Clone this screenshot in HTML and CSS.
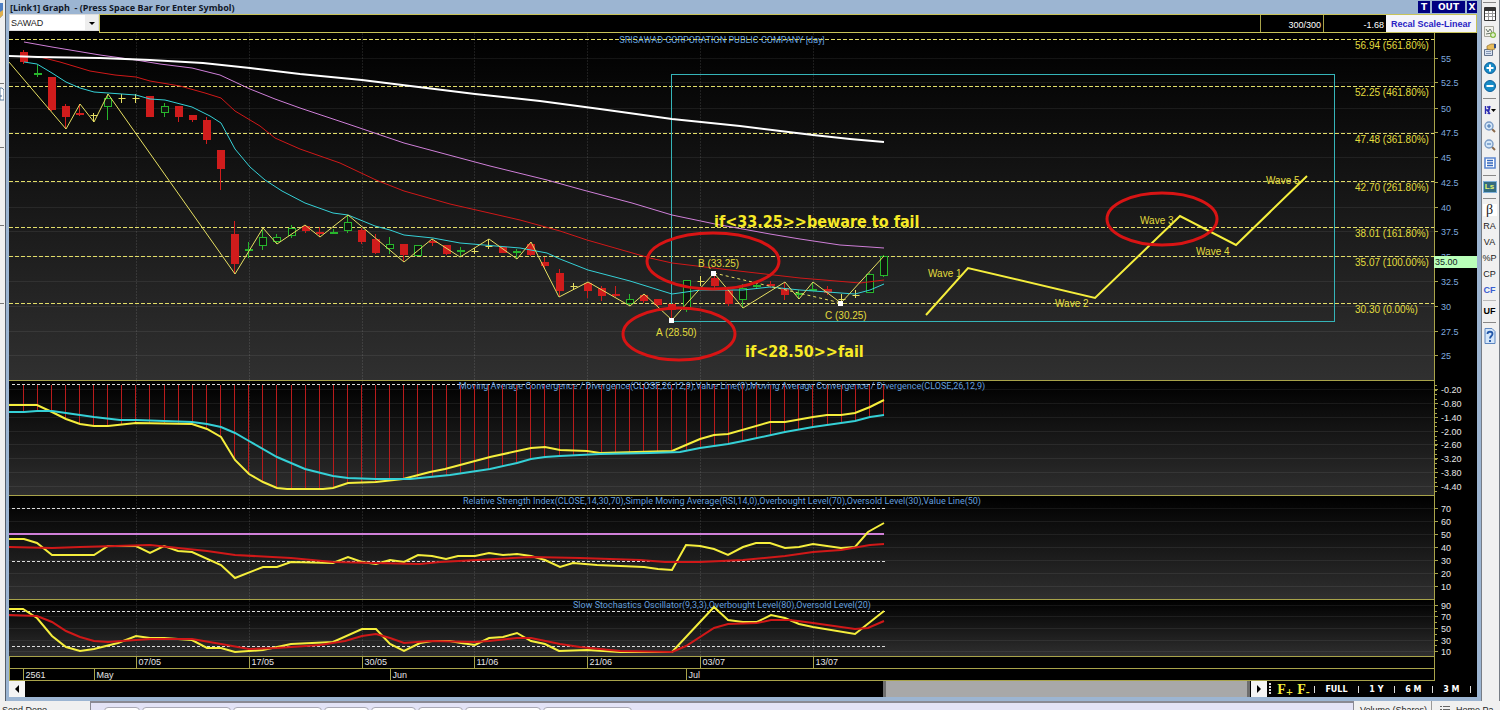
FILE: index.html
```html
<!DOCTYPE html>
<html lang="en">
<head>
<meta charset="utf-8">
<title>[Link1] Graph</title>
<link rel="stylesheet" href="styles.css">
</head>
<body>
<div class="app">
  <div class="edge" aria-hidden="true">
    <svg viewBox="0 0 4 701" width="4" height="701">
      <path d="M0 3h3v12l-3 3z" fill="#4f7fc4"/><path d="M0 12l3-2v5l-3 3z" fill="#e0b04c"/>
      <path d="M0 83.5h4M0 147.5h4M0 225.5h4M0 303.5h4" stroke="#777"/>
      <path d="M0 88h2l2 2v10H0z" fill="#fff" stroke="#5f7fa0"/><path d="M0 96h2" stroke="#45658c"/>
    </svg>
  </div>
  <main class="window">
    <header class="titlebar">
      <h1 class="title">[Link1] Graph&nbsp; - (Press Space Bar For Enter Symbol)</h1>
      <button class="winbtn" type="button">T</button>
      <button class="winbtn winbtn-out" type="button">OUT</button>
      <button class="winbtn winbtn-x" type="button">X</button>
    </header>
    <div class="symbolbar">
      <div class="symbol">
        <select class="symbol-select" aria-label="Symbol"><option>SAWAD</option></select>
      </div>
      <div class="readout">
        <span class="cell cell-range">300/300</span>
        <span class="cell cell-change">-1.68</span>
        <button class="recal" type="button">Recal Scale-Linear</button>
      </div>
    </div>
    <svg id="price" class="pane" viewBox="9 33 1468 348" role="img" aria-label="Price"></svg>
    <svg id="macd" class="pane" viewBox="9 381 1468 115" role="img" aria-label="MACD"></svg>
    <svg id="rsi" class="pane" viewBox="9 496 1468 104" role="img" aria-label="RSI"></svg>
    <svg id="stoch" class="pane" viewBox="9 600 1468 57" role="img" aria-label="Stochastics"></svg>
    <svg id="dates" class="pane" viewBox="9 657 1468 24" role="img" aria-label="Dates"></svg>
    <footer class="scroller">
      <button class="arrow" type="button" aria-label="Scroll left"><svg width="6" height="8" viewBox="0 0 6 8"><path d="M5 0v8L1 4z"/></svg></button>
      <div class="track"><div class="thumb"></div></div>
      <button class="arrow" type="button" aria-label="Scroll right"><svg width="6" height="8" viewBox="0 0 6 8"><path d="M1 0v8l4-4z"/></svg></button>
      <div class="ranges">
        <svg width="4" height="12" viewBox="0 0 4 12"><path d="M1 0v12" stroke="#ddd" stroke-width="2" stroke-dasharray="2 1"/></svg>
        <button class="font" type="button">F<sub>+</sub></button>
        <button class="font" type="button">F<sub>-</sub></button>
        <i class="bar"></i><button class="range" type="button">FULL</button>
        <i class="bar"></i><button class="range" type="button">1 Y</button>
        <i class="bar"></i><button class="range" type="button">6 M</button>
        <i class="bar"></i><button class="range" type="button">3 M</button>
        <i class="bar"></i>
      </div>
    </footer>
  </main>
  <aside class="tools">
    <hr class="rule rule-top">
    <button class="tool" type="button" aria-label="Table"><svg viewBox="0 0 12 14"><path d="M.5.5h11v13H.5z" fill="#fff" stroke="#333"/><path d="M1 1h10v3H1z" fill="#333"/><path d="M1 6.5h10M1 9.5h10M4.500 4v9M8.500 4v9" stroke="#999" fill="none"/></svg></button>
    <button class="tool" type="button" aria-label="Chart"><svg viewBox="0 0 12 14"><path d="M.5 1.500h9v10h-9z" fill="#f2f2ea" stroke="#a5a59b"/><path d="M2 4l2 3 2-3 2 3M2 9l6-1" stroke="#67746b" fill="none"/><circle cx="9" cy="10" r="3" fill="#84bb45"/><path d="M9 8v4M7 10h4" stroke="#fff"/></svg></button>
    <button class="tool" type="button" aria-label="Properties"><svg viewBox="0 0 12 14"><path d="M.5 6.500h8v6h-8z" fill="#d9e3f2" stroke="#62728c"/><path d="M2 8.500h5M2 10.500h5" stroke="#8597b6"/><path d="M3 3l4-2h4v5L7 7 3 6z" fill="#e7bc5b" stroke="#927030" stroke-width=".7"/><path d="M10 1h2v4h-2z" fill="#334f86"/></svg></button>
    <button class="tool" type="button" aria-label="Add"><svg viewBox="0 0 12 14"><circle cx="6" cy="7" r="5.500" fill="#178bc6" stroke="#0d5f9c"/><path d="M6 3.500v7M2.500 7h7" stroke="#fff" stroke-width="2"/></svg></button>
    <button class="tool" type="button" aria-label="Remove"><svg viewBox="0 0 12 14"><circle cx="6" cy="7" r="5.500" fill="#178bc6" stroke="#0d5f9c"/><path d="M2.500 7h7" stroke="#fff" stroke-width="2"/></svg></button>
    <hr class="rule">
    <button class="tool tool-short" type="button" aria-label="Drawing"><svg viewBox="0 0 12 12"><path d="M1.500 2v8M3 3h2v3H2M3 6l3 4M6 2L4 10" stroke="#2a2ab0" stroke-width="1.400" fill="none"/><path d="M7 5h5l-2.500 3z" fill="#000"/></svg></button>
    <button class="tool" type="button" aria-label="Zoom in"><svg viewBox="0 0 12 14"><path d="M7 8l4 4" stroke="#8a6a4c" stroke-width="2"/><circle cx="5" cy="6" r="4" fill="#d3e6f8" stroke="#7b9cc6" stroke-width="1.400"/><path d="M5 4v4M3 6h4" stroke="#3e70ad"/></svg></button>
    <button class="tool" type="button" aria-label="Zoom out"><svg viewBox="0 0 12 14"><path d="M7 8l4 4" stroke="#8a6a4c" stroke-width="2"/><circle cx="5" cy="6" r="4" fill="#d3e6f8" stroke="#7b9cc6" stroke-width="1.400"/><path d="M3 6h4" stroke="#3e70ad"/></svg></button>
    <button class="tool" type="button" aria-label="List"><svg viewBox="0 0 12 14"><path d="M1 2h10v10H1z" fill="#fff" stroke="#5b86d0" stroke-width="1.600"/><path d="M3 4.500h6M3 7h6M3 9.500h6" stroke="#3567bd" stroke-width="1.400"/></svg></button>
    <hr class="rule">
    <button class="tool tool-ls" type="button">Ls</button>
    <hr class="rule">
    <button class="tool tool-beta" type="button">β</button>
    <button class="tool tool-text" type="button">RA</button>
    <button class="tool tool-text" type="button">VA</button>
    <button class="tool tool-text" type="button">%P</button>
    <button class="tool tool-text" type="button">CP</button>
    <button class="tool tool-text tool-cf" type="button">CF</button>
    <hr class="rule rule-light">
    <button class="tool tool-text tool-uf" type="button">UF</button>
    <hr class="rule">
    <button class="tool tool-help" type="button" aria-label="Help"><svg viewBox="0 0 12 16"><path d="M1 .5h7l3 3v12H1z" fill="#d4e6fa" stroke="#5c86c0"/><path d="M3.500 6c0-3 5-3 5 0 0 2-2.500 2-2.500 4.500M6 12v2" stroke="#2257a8" stroke-width="1.800" fill="none"/></svg></button>
  </aside>
</div>
<div class="dock">
  <div class="dock-left">Send Depo</div>
  <div class="dock-tabs"><i class="tab tab-s"></i><i class="tab tab-l"></i><i class="tab tab-l"></i><i class="tab tab-m"></i><i class="tab tab-m"></i><i class="tab tab-m"></i><i class="tab tab-w"></i><i class="tab tab-l"></i></div>
  <div class="dock-vol">Volume (Shares)</div>
  <div class="dock-port"><svg width="10" height="10" viewBox="0 0 10 10"><path d="M0 1.500h2M3 1.500h7M0 4.500h2M3 4.500h7" stroke="#666"/></svg>Home Pa</div>
</div>
<script src="chart.js"></script>
</body>
</html>
```
FILE: styles.css
```css
* { box-sizing: border-box; }
body {
  margin: 0;
  background: #f0f0f0;
  font-family: "Liberation Sans", Arial, sans-serif;
  font-size: 9px;
  overflow-x: hidden;
}
button { border: 0; padding: 0; margin: 0; font: inherit; color: inherit; background: none; }

.app { display: flex; }
.edge { flex: none; width: 6px; overflow: hidden; border-right: 1px solid #555d68; }
.edge svg { display: block; }
.window {
  flex: 1;
  min-width: 0;
  background: #000;
  border: solid #9cb5d2;
  border-width: 0 4px 4px 3px;
}

.titlebar { display: flex; align-items: center; gap: 2px; height: 14px; background: #9cb5d2; }
.title {
  flex: 1;
  margin: 0;
  padding-left: 1px;
  font: bold 9px/13px "Noto Sans", sans-serif;
  color: #101828;
  white-space: nowrap;
}
.winbtn { width: 12px; height: 12px; background: #000080; color: #fff; font: bold 9px/12px "DejaVu Sans", sans-serif; }
.winbtn-out { width: 33px; }
.winbtn-x { width: 10px; }

.symbolbar { display: flex; height: 19px; background: #000; }
.symbol { flex: none; width: 90px; height: 17px; position: relative; background: #fff; }
.symbol::after {
  content: "";
  position: absolute;
  right: 4px;
  top: 8px;
  border: 3px solid transparent;
  border-top-color: #000;
  pointer-events: none;
}
.symbol-select {
  appearance: none;
  width: 100%;
  height: 17px;
  border: 1px solid #ddd;
  border-radius: 0;
  padding: 0 1px;
  font: 9px/14px "Liberation Sans", Arial, sans-serif;
  color: #222;
  background: linear-gradient(90deg, #fff 85%, #eee 85%);
}
.readout { flex: 1; display: flex; justify-content: flex-end; border: 1px solid #c8c35a; color: #fff; }
.cell { border-left: 1px solid #a8a34a; padding-right: 2px; line-height: 20px; text-align: right; }
.cell-range { width: 63px; }
.cell-change { width: 63px; }
.recal { width: 90px; background: #f4f4fa; color: #2a22c4; font-weight: bold; line-height: 18px; white-space: nowrap; }

.pane { display: block; width: 100%; height: auto; background: #000; }
.pane text { font-family: "Liberation Sans", Arial, sans-serif; font-size: 9px; }
.grid { stroke: #fff; stroke-opacity: .07; }
.vgrid { stroke: #fff; stroke-opacity: .1; stroke-dasharray: 2 1; }
.frame { stroke: #a8a34a; fill: none; }
.fib { stroke: #e2dd68; stroke-dasharray: 4 2; }
.level { stroke: #ddd; stroke-dasharray: 3 2; }
.line { fill: none; stroke-width: 1; }
.thick { stroke-width: 2; }
.yellow { stroke: #f5ee3c; }
.pale { stroke: #e6df62; }
.cyan { stroke: #35d0d6; }
.red { stroke: #d01818; }
.pink { stroke: #cf7fd8; }
.white { stroke: #fff; }
.hist { stroke: #b81c1c; }
.up { fill: #101410; stroke: #27b52c; }
.down { fill: #d01c1c; stroke: #d01c1c; }
.box { fill: none; stroke: #35b4b8; }
.ring { fill: none; stroke: #d81414; stroke-width: 3; }
.dot { fill: #fff; }
.tag { fill: #b9ffb9; }
.pane .t-title { fill: #639fde; text-anchor: middle; font-family: Roboto, sans-serif; }
.pane .t-price { fill: #7fa9de; }
.pane .t-scale { fill: #e6e6e6; }
.pane .t-yellow { fill: #e2dc3e; }
.pane .t-fib { fill: #e2dc3e; font-size: 10px; }
.pane .t-dark { fill: #122; }
.pane .t-note { fill: #f7ea26; font: bold 16px "DejaVu Sans Condensed", "DejaVu Sans", sans-serif; }

.scroller { display: flex; height: 16px; background: #000; }
.arrow { flex: none; width: 16px; background: #f4f4f4; }
.arrow svg { display: block; margin: auto; }
.track { flex: 1; display: flex; justify-content: flex-end; border-right: 1px solid #000; }
.thumb { width: 30%; background: #a8a8a8; border: solid #6e6e6e; border-width: 0 3px; }
.ranges { flex: none; display: flex; align-items: center; justify-content: space-between; width: 210px; padding: 0 6px 0 2px; color: #fff; }
.font { font: bold 14px/15px "Liberation Serif", serif; color: #f5ee3c; }
.font sub { font-size: 12px; line-height: 8px; vertical-align: -2px; }
.bar { width: 1px; height: 7px; background: #ddd; }
.range { padding: 0 6px; font: bold 8px/15px "DejaVu Sans", sans-serif; }

.tools {
  flex: none;
  width: 19px;
  display: flex;
  flex-direction: column;
  align-items: center;
  gap: 4px;
  padding-right: 2px;
  border: solid #777d86;
  border-width: 0 1px;
  overflow: hidden;
}
.rule { flex: none; width: 13px; height: 1px; margin: 1px 0; border: 0; background: #888; }
.rule-top { margin: 2px 0 0; }
.rule-light { background: #bbb; margin: 0; }
.tool { flex: none; width: 14px; height: 14px; line-height: 14px; color: #222; }
.tool svg { display: block; width: 12px; height: 14px; margin: auto; }
.tool-short, .tool-short svg { height: 12px; }
.tool-ls { height: 12px; background: #336b80; color: #e1f36b; font-weight: bold; font-size: 8px; border: 1px solid #7fb0da; line-height: 10px; }
.tool-beta { height: 12px; background: #fff; font: 14px/12px "Liberation Serif", serif; }
.tool-text { height: 12px; line-height: 12px; display: flex; justify-content: center; }
.tool-cf { color: #3a5fd0; font-weight: bold; }
.tool-uf { font-weight: bold; color: #000; }
.tool-help svg { height: 16px; }

.dock { display: flex; height: 9px; overflow: hidden; line-height: 11px; font-size: 9px; color: #222; }
.dock > div { padding-top: 4px; white-space: nowrap; }
.dock-left { flex: none; width: 90px; padding-left: 2px; }
.dock .dock-tabs { flex: 1; display: flex; gap: 2px; padding: 4px 0 0 13px; background: #e3e3f6; border: solid #8a8a94; border-width: 2px 1px 0; }
.tab { flex: none; height: 8px; background: #fff; border: 1px solid #a9a9b5; border-radius: 4px 4px 0 0; }
.tab-s { width: 36px; }
.tab-m { width: 45px; }
.tab-l { width: 89px; }
.tab-w { width: 76px; }
.dock-vol { flex: none; width: 78px; padding-left: 6px; border-right: 1px solid #999; }
.dock-port { flex: none; width: 68px; display: flex; gap: 6px; padding-left: 8px; }
```
FILE: chart.js
```js
const LEFT = 9, PLOT = 1434, FIRST = 23.5, STEP = 14.107;
const DAYS = [136.5, 249.5, 362.5, 474.5, 587.5, 700.5, 813.5];
const at = i => Math.round(FIRST + STEP * i);

function add(pane, tag, attrs, text) {
  const el = document.createElementNS('http://www.w3.org/2000/svg', tag);
  for (const key in attrs) el.setAttribute(key, attrs[key]);
  if (text !== undefined) el.textContent = text;
  pane.appendChild(el);
  return el;
}
const line = (p, cls, x1, y1, x2, y2) => add(p, 'line', { class: cls, x1, y1, x2, y2 });
const poly = (p, cls, points) => add(p, 'polyline', { class: 'line ' + cls, points });
const label = (p, cls, x, y, text) => add(p, 'text', { class: cls, x, y }, text);

function base(id, top, bottom) {
  const p = document.getElementById(id);
  const defs = add(p, 'defs', {});
  const g = add(defs, 'linearGradient', { id: id + '-bg', x1: 0, y1: 0, x2: 0, y2: 1 });
  add(g, 'stop', { offset: '0', 'stop-color': '#000' });
  add(g, 'stop', { offset: '1', 'stop-color': '#303030' });
  add(p, 'rect', { x: LEFT, y: top, width: PLOT - LEFT, height: bottom - top, fill: `url(#${id}-bg)` });
  DAYS.forEach(x => line(p, 'vgrid', x, top, x, bottom));
  line(p, 'frame', PLOT + .5, top, PLOT + .5, bottom);
  line(p, 'frame', LEFT, bottom - .5, PLOT, bottom - .5);
  return p;
}
function scale(p, cls, items) {
  items.forEach(([y, text]) => {
    line(p, 'grid', LEFT, y + .5, PLOT, y + .5);
    line(p, 'frame', PLOT, y + .5, PLOT + 4, y + .5);
    label(p, cls, PLOT + 7, y + 4, text);
  });
}
function valueAt(points, x) {
  const pts = points.split(' ').map(s => s.split(',').map(Number));
  for (let i = 1; i < pts.length; i++) {
    const [x0, y0] = pts[i - 1], [x1, y1] = pts[i];
    if (x <= x1) return y0 + (y1 - y0) * (x - x0) / (x1 - x0);
  }
  return pts[pts.length - 1][1];
}

/* Price */
const price = base('price', 33, 381);
scale(price, 't-price', [[58, '55'], [82, '52.5'], [108, '50'], [132, '47.5'], [157, '45'], [182, '42.5'], [207, '40'], [231, '37.5'], [256, '35'], [281, '32.5'], [306, '30'], [331, '27.5'], [355, '25']]);
label(price, 't-title', 722, 43, 'SRISAWAD CORPORATION PUBLIC COMPANY [day]');
[[39, '56.94 (561.80%)'], [86, '52.25 (461.80%)'], [133, '47.48 (361.80%)'], [181, '42.70 (261.80%)'], [227, '38.01 (161.80%)'], [256, '35.07 (100.00%)'], [303, '30.30 (0.00%)']].forEach(([y, text]) => {
  line(price, 'fib', LEFT, y + .5, PLOT, y + .5);
  label(price, 't-fib', 1355, y + 10, text);
});
add(price, 'rect', { class: 'box', x: 671.5, y: 74.5, width: 663, height: 247 });

/* kind, body top, body bottom, wick top, wick bottom */
const candles = [
  ['d', 52, 62, 50, 64], ['u', 73, 75, 65, 77], ['d', 77, 110, 77, 111], ['d', 106, 117, 104, 129], ['d', 113, 115, 104, 116],
  ['x', 115, 115, 113, 122], ['u', 98, 107, 94, 120], ['x', 98, 98, 94, 103], ['x', 98, 98, 94, 103], ['d', 96, 117, 96, 117],
  ['u', 106, 113, 103, 117], ['d', 106, 117, 106, 122], ['d', 115, 120, 115, 122], ['d', 120, 140, 117, 144], ['d', 150, 169, 150, 190],
  ['d', 234, 264, 221, 274], ['u', 249, 251, 242, 258], ['u', 237, 246, 230, 250], ['u', 237, 242, 234, 244], ['u', 228, 236, 225, 238],
  ['d', 226, 231, 225, 233], ['d', 232, 234, 227, 237], ['u', 232, 233, 229, 233], ['u', 222, 231, 215, 233], ['d', 230, 242, 228, 244],
  ['d', 239, 253, 234, 254], ['u', 244, 249, 237, 254], ['d', 244, 255, 244, 261], ['u', 245, 256, 245, 256], ['d', 241, 243, 239, 246],
  ['d', 245, 254, 245, 255], ['u', 250, 251, 247, 256], ['x', 251, 251, 248, 254], ['x', 246, 246, 239, 249], ['d', 247, 253, 247, 253],
  ['u', 251, 252, 249, 259], ['d', 244, 255, 242, 256], ['d', 262, 266, 257, 268], ['d', 273, 291, 269, 296], ['x', 286, 286, 283, 289],
  ['d', 283, 291, 282, 298], ['d', 288, 296, 286, 301], ['d', 294, 296, 286, 297], ['u', 299, 304, 294, 306], ['d', 295, 301, 294, 303],
  ['d', 299, 305, 299, 306], ['d', 304, 310, 304, 320], ['u', 280, 310, 280, 312], ['x', 281, 281, 276, 286], ['d', 278, 286, 273, 288],
  ['d', 290, 304, 290, 306], ['u', 288, 300, 284, 308], ['u', 285, 286, 283, 288], ['d', 284, 286, 281, 288], ['d', 288, 295, 283, 300],
  ['u', 293, 295, 290, 299], ['u', 289, 290, 283, 291], ['d', 289, 293, 286, 295], ['x', 299, 299, 294, 303], ['x', 295, 295, 290, 298],
  ['u', 274, 293, 273, 293], ['u', 256, 276, 255, 277]
];
candles.forEach(([kind, top, bottom, high, low], i) => {
  const x = at(i) - .5;
  if (kind === 'x') {
    line(price, 'pale', x, high, x, low);
    line(price, 'pale', x - 3, top + .5, x + 4, top + .5);
    return;
  }
  const cls = kind === 'u' ? 'up' : 'down';
  line(price, cls, x, high, x, low);
  add(price, 'rect', { class: cls, x: x - 3, y: top + .5, width: 7, height: Math.max(bottom - top - 1, 1) });
});
poly(price, 'pink', '24,42 52,47 100,55 136,60 160,64 192,68 220,75 250,89 275,99 300,108 348,124 404,143 460,158 490,166 547,180 583,190 632,203 672,215 715,224 770,234 800,239 840,245 870,247 884,248');
poly(price, 'red', '24,56 40,57 60,62 90,71 115,75 136,77 150,81 180,86 205,93 221,98 235,111 260,126 275,138 300,149 340,163 376,180 404,191 450,204 520,220 560,231 587,240 650,258 672,263 730,270 800,278 860,283 884,280');
poly(price, 'cyan', '24,62 37,64 52,73 66,82 80,88 94,92 108,93 136,95 150,99 165,100 192,107 210,116 221,123 235,149 250,167 265,180 282,191 305,203 333,213 348,215 375,226 390,230 404,235 433,238 460,243 520,248 547,253 560,259 588,270 630,281 672,294 700,290 743,290 770,287 800,290 841,293 855,294 870,290 884,284');
poly(price, 'white thick', '9,56 38,57 100,58 150,60 203,63 250,68 300,74 362,80 475,94 540,101 600,109 672,119 740,126 813,135 850,139 884,142');
poly(price, 'pale', '9,62 66,129 80,104 94,122 108,94 235,274 263,228 277,244 305,225 320,237 348,215 404,262 432,239 460,257 489,239 517,259 531,242 559,297 588,282 630,306 644,294 672,320 714,273 743,308 785,282 799,299 813,282 841,303 884,256');
add(price, 'line', { class: 'pale', x1: 714, y1: 273, x2: 841, y2: 303, 'stroke-dasharray': '3 3' });
[[672, 320], [714, 273], [841, 303]].forEach(([x, y]) => add(price, 'rect', { class: 'dot', x: x - 3, y: y - 2, width: 5, height: 5 }));
poly(price, 'yellow thick', '926,315 968,268 1095,298 1180,216 1236,245 1307,176');
[[713, 261, 66, 28], [679, 334, 56, 26], [1162, 219, 55, 26]].forEach(([cx, cy, rx, ry]) => add(price, 'ellipse', { class: 'ring', cx, cy, rx, ry }));
[[698, 267, 'B (33.25)'], [656, 336, 'A (28.50)'], [825, 319, 'C (30.25)']].forEach(([x, y, text]) => label(price, 't-fib', x, y, text));
[[928, 277, 'Wave 1'], [1055, 307, 'Wave 2'], [1140, 224, 'Wave 3'], [1196, 255, 'Wave 4'], [1266, 184, 'Wave 5']].forEach(([x, y, text]) => label(price, 't-fib', x, y, text));
label(price, 't-note', 714, 227, 'if<33.25>>beware to fail');
label(price, 't-note', 745, 357, 'if<28.50>>fail');
add(price, 'rect', { class: 'tag', x: 1434, y: 256, width: 43, height: 12 });
label(price, 't-dark', 1435, 265, '35.00');

/* MACD */
const macd = base('macd', 381, 496);
scale(macd, 't-scale', [[389, '-0.20'], [403, '-0.80'], [417, '-1.40'], [431, '-2.00'], [444, '-2.60'], [458, '-3.20'], [472, '-3.80'], [486, '-4.40']]);
for (let i = 0; i < 24; i++) {
  const y = Math.round(385 + i * 4.600) + .5;
  line(macd, 'frame', PLOT, y, PLOT + 3, y);
}
const fast = '9,405 37,405 52,412 66,419 80,424 94,426 108,426 136,423 192,424 207,429 221,437 235,460 249,474 263,482 277,488 287,489 323,489 333,488 348,483 376,482 403,479 430,472 445,469 475,461 490,457 531,448 545,447 560,450 587,451 600,453 672,451 686,445 700,439 714,435 728,434 770,422 785,422 813,417 827,415 841,415 855,413 870,407 884,400';
const slow = '9,412 24,412 37,411 52,411 66,413 80,415 94,417 120,420 136,420 192,422 207,424 221,427 235,433 249,441 277,457 305,469 333,476 348,478 376,479 410,479 430,477 450,475 490,469 517,463 531,459 545,457 560,456 600,454 650,453 680,452 700,448 714,446 728,444 743,441 785,432 813,427 841,423 855,421 870,417 884,415';
line(macd, 'level', LEFT + 3, 384.5, 885, 384.5);
label(macd, 't-title', 722, 389, 'Moving Average Convergence / Divergence(CLOSE,26,12,9),Value Line(0),Moving Average Convergence / Divergence(CLOSE,26,12,9)');
for (let i = 0; i < 62; i++) {
  const x = at(i) - .5;
  line(macd, 'hist', x, 385, x, Math.max(valueAt(fast, x), valueAt(slow, x)));
}
poly(macd, 'yellow thick', fast);
poly(macd, 'cyan thick', slow);

/* RSI */
const rsi = base('rsi', 496, 600);
scale(rsi, 't-scale', [[508, '70'], [521, '60'], [534, '50'], [547, '40'], [560, '30'], [573, '20'], [586, '10']]);
label(rsi, 't-title', 722, 504, 'Relative Strength Index(CLOSE,14,30,70),Simple Moving Average(RSI,14,0),Overbought Level(70),Oversold Level(30),Value Line(50)');
line(rsi, 'level', LEFT + 3, 508.5, 885, 508.5);
line(rsi, 'level', LEFT + 3, 561.5, 885, 561.5);
poly(rsi, 'pink thick', '9,534 884,534');
poly(rsi, 'yellow thick', '9,539 24,539 37,543 52,555 94,555 108,546 136,546 150,553 164,546 178,551 192,552 221,565 235,578 263,567 277,567 291,562 333,563 348,557 362,562 376,564 390,560 404,562 418,555 432,556 446,559 458,556 475,556 489,553 503,555 517,554 531,556 545,560 560,567 573,563 597,565 644,567 658,569 672,570 686,545 700,546 714,549 728,555 743,547 756,543 770,543 785,548 799,547 813,544 841,548 855,547 868,532 884,523');
poly(rsi, 'red thick', '9,547 52,548 80,547 150,545 178,548 207,551 235,555 291,558 333,562 376,563 420,564 440,562 531,557 580,558 640,560 665,562 700,562 743,560 785,556 813,552 841,550 870,545 884,544');

/* Stochastics */
const stoch = base('stoch', 600, 657);
scale(stoch, 't-scale', [[605, '90'], [616, '70'], [628, '50'], [640, '30'], [651, '10']]);
label(stoch, 't-title', 722, 608, 'Slow Stochastics Oscillator(9,3,3),Overbought Level(80),Oversold Level(20)');
line(stoch, 'level', LEFT + 3, 611.5, 885, 611.5);
line(stoch, 'level', LEFT + 3, 646.5, 885, 646.5);
[611, 622, 634, 645].forEach(y => line(stoch, 'frame', PLOT, y + .5, PLOT + 3, y + .5));
poly(stoch, 'yellow thick', '9,609 23,609 37,618 52,636 66,647 80,651 94,649 118,643 136,636 150,638 164,638 192,640 207,648 221,648 235,652 263,650 291,644 333,642 362,629 376,629 390,644 404,651 420,643 432,641 450,641 461,643 475,645 489,638 503,637 517,633 531,641 545,644 559,651 587,650 620,652 672,652 714,607 728,620 743,622 757,622 771,615 785,618 799,624 813,627 855,634 884,611');
poly(stoch, 'red thick', '9,615 37,616 52,622 66,631 80,637 94,641 108,642 150,639 192,639 221,644 249,649 277,648 320,645 345,641 362,636 376,634 390,638 404,643 430,641 475,642 489,641 517,638 531,638 560,644 580,647 620,651 672,652 686,646 714,628 728,624 757,623 771,620 790,620 813,623 855,629 868,628 884,621');

/* Date axis */
const dates = document.getElementById('dates');
line(dates, 'frame', LEFT, 668.5, PLOT, 668.5);
line(dates, 'frame', LEFT, 680.5, PLOT, 680.5);
line(dates, 'frame', PLOT + .5, 657, PLOT + .5, 681);
line(dates, 'frame', LEFT + .5, 657, LEFT + .5, 681);
['07/05', '17/05', '30/05', '11/06', '21/06', '03/07', '13/07'].forEach((text, i) => {
  line(dates, 'frame', DAYS[i], 657, DAYS[i], 668);
  label(dates, 't-scale', DAYS[i] + 2, 665, text);
});
[[23.5, '2561'], [94.5, 'May'], [390.5, 'Jun'], [686.5, 'Jul']].forEach(([x, text]) => {
  line(dates, 'frame', x, 669, x, 680);
  label(dates, 't-scale', x + 2, 678, text);
});
```
